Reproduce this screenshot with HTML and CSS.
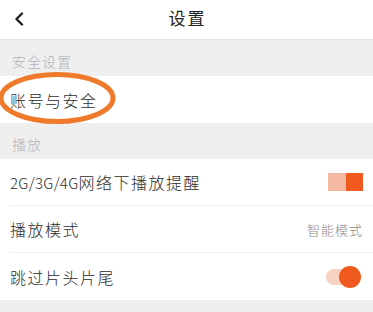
FILE: index.html
```html
<!DOCTYPE html>
<html lang="zh-CN">
<head>
<meta charset="utf-8">
<title>设置</title>
<link rel="stylesheet" href="styles.css">
</head>
<body>
<div class="page">
  <header class="topbar">
    <span class="back">
      <svg width="10" height="14" viewBox="0 0 10 14"><path d="M8 1.5 L2.5 7 L8 12.5" fill="none" stroke="#222" stroke-width="2.4" stroke-linecap="round" stroke-linejoin="round"/></svg>
    </span>
    <h1 class="title">设置</h1>
  </header>

  <div class="section">安全设置</div>
  <div class="group">
    <div class="row row-account">
      <span class="label">账号与安全</span>
      <svg class="circle-mark" width="124" height="58" viewBox="0 0 124 58"><ellipse cx="59" cy="27" rx="56" ry="23.5" fill="none" stroke="#ef7a2c" stroke-width="5"/></svg>
    </div>
  </div>

  <div class="section">播放</div>
  <div class="group">
    <div class="row">
      <span class="label"><span class="latin">2G/3G/4G</span>网络下播放提醒</span>
      <span class="switch-square"><span class="sq-off"></span><span class="sq-on"></span></span>
    </div>
    <div class="row">
      <span class="label">播放模式</span>
      <span class="value">智能模式</span>
    </div>
    <div class="row last">
      <span class="label">跳过片头片尾</span>
      <span class="switch-round"><span class="knob"></span></span>
    </div>
  </div>
  <div class="footer-space"></div>
</div>
</body>
</html>
```

FILE: styles.css
```css
html, body {
  margin: 0;
  padding: 0;
  background: #efeff0;
}
.page {
  width: 373px;
  height: 312px;
  overflow: hidden;
  font-family: "Noto Sans CJK SC", "Noto Sans", sans-serif;
  color: #2b2b2b;
  background: #efeff0;
}
.topbar {
  height: 40px;
  background: #fff;
  border-bottom: 1px solid #e2e2e2;
  box-sizing: border-box;
  display: flex;
  align-items: center;
  justify-content: center;
  position: relative;
}
.back {
  position: absolute;
  left: 14px;
  top: 12px;
  display: flex;
}
.title {
  margin: 0;
  font-size: 17px;
  font-weight: 400;
  letter-spacing: 2px;
  padding-left: 2px;
  color: #222;
  line-height: 1;
  margin-top: -4px;
}
.section {
  height: 36px;
  box-sizing: border-box;
  padding: 11px 0 0 12px;
  font-size: 14px;
  font-weight: 300;
  letter-spacing: 1px;
  color: #b3b3b6;
  line-height: 20px;
}
.group {
  background: #fff;
}
.row {
  height: 47px;
  box-sizing: border-box;
  margin-left: 10px;
  padding-right: 10px;
  border-bottom: 1px solid #f0f0f0;
  display: flex;
  align-items: center;
  justify-content: space-between;
  position: relative;
}
.row.last, .row-account {
  border-bottom: none;
}
.label {
  font-size: 16px;
  font-weight: 300;
  letter-spacing: 1.5px;
  color: #2b2b2b;
}
.latin {
  font-size: 15px;
  letter-spacing: 0.3px;
}
.circle-mark {
  position: absolute;
  left: -12px;
  top: -5px;
}
.value {
  font-size: 13px;
  font-weight: 300;
  letter-spacing: 1px;
  color: #8a8a8a;
}
.switch-square {
  display: flex;
  width: 35px;
  height: 18px;
}
.sq-off {
  flex: 1;
  background: #f5b9a3;
}
.sq-on {
  flex: 1;
  background: #f05a1e;
}
.switch-round {
  width: 33px;
  height: 16px;
  border-radius: 8px;
  background: #f8d3c3;
  position: relative;
  margin-right: 4px;
}
.knob {
  position: absolute;
  right: -2px;
  top: -3px;
  width: 22px;
  height: 22px;
  border-radius: 50%;
  background: #f05a1e;
}
.footer-space {
  height: 20px;
}
```
